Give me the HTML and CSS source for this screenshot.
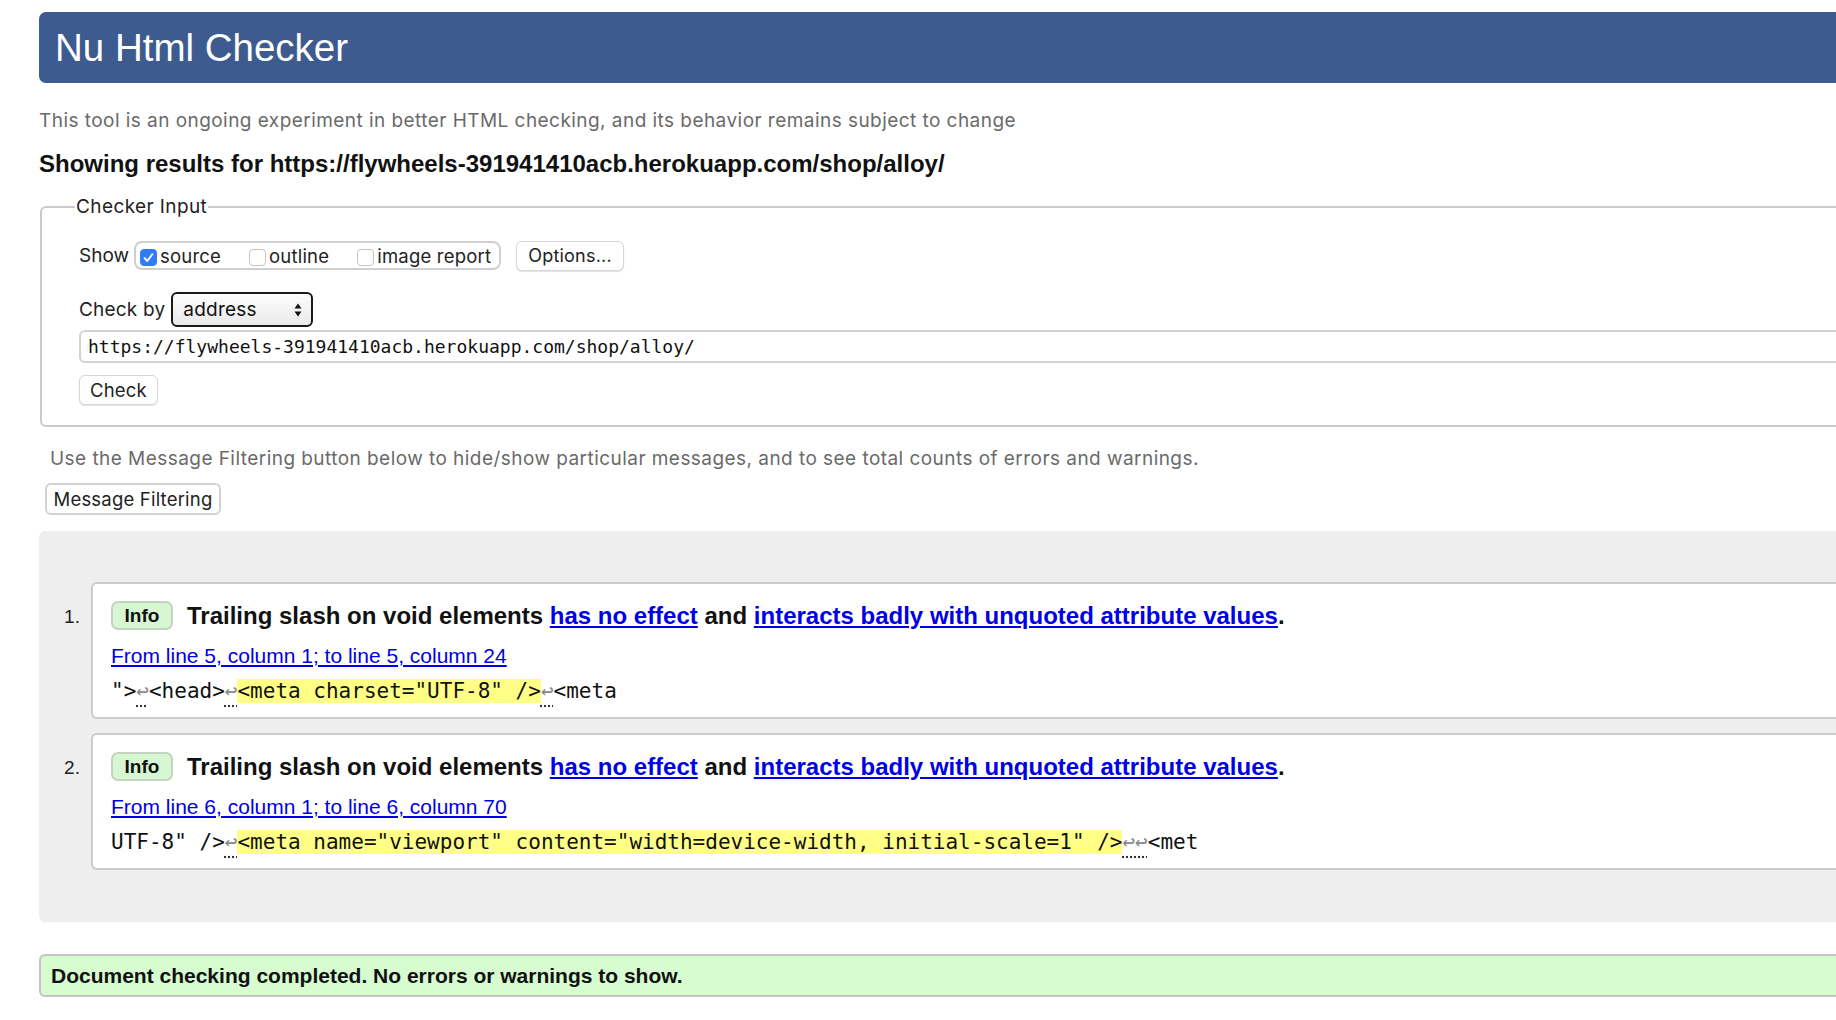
FILE: index.html
```html
<!DOCTYPE html>
<html lang="en">
<head>
<meta charset="utf-8">
<title>Nu Html Checker</title>
<link rel="stylesheet" href="styles.css">
</head>
<body>
<div class="page">
  <header class="banner"><h1>Nu Html Checker</h1></header>
  <p class="intro">This tool is an ongoing experiment in better HTML checking, and its behavior remains subject to change</p>
  <h2 class="showing">Showing results for https://flywheels-391941410acb.herokuapp.com/shop/alloy/</h2>

  <fieldset class="checker">
    <legend>Checker Input</legend>
    <div class="row show-row">
      <span class="lbl show-lbl">Show</span>
      <div class="cbgroup">
        <label class="opt"><span class="cb checked"><svg viewBox="0 0 16 16" width="16" height="16"><path d="M3.8 8.6 L6.7 11.8 L12.2 4.4" fill="none" stroke="#fff" stroke-width="1.9" stroke-linecap="round" stroke-linejoin="round"/></svg></span>source</label>
        <label class="opt"><span class="cb"></span>outline</label>
        <label class="opt"><span class="cb"></span>image report</label>
      </div>
      <button class="btn options">Options...</button>
    </div>
    <div class="row by-row">
      <span class="lbl">Check by</span>
      <div class="select"><span>address</span><svg viewBox="0 0 8 14" width="8" height="14"><path d="M4 0.5 L7.5 5.5 H0.5 Z M4 13.5 L7.5 8.5 H0.5 Z" fill="#111"/></svg></div>
    </div>
    <div class="url">https://flywheels-391941410acb.herokuapp.com/shop/alloy/</div>
    <button class="btn check">Check</button>
  </fieldset>

  <p class="filter-note">Use the Message Filtering button below to hide/show particular messages, and to see total counts of errors and warnings.</p>
  <button class="btn filter">Message Filtering</button>

  <div class="results">
    <ol class="messages">
      <li class="msg">
        <span class="num">1.</span>
        <div class="box">
          <p class="title"><span class="badge">Info</span><span class="text">Trailing slash on void elements <a href="#">has no effect</a> and <a href="#">interacts badly with unquoted attribute values</a>.</span></p>
          <p class="loc"><a href="#">From line 5, column 1; to line 5, column 24</a></p>
          <p class="extract"><code>"&gt;<span class="lf">↩</span>&lt;head&gt;<span class="lf">↩</span><mark>&lt;meta charset="UTF-8" /&gt;</mark><span class="lf">↩</span>&lt;meta</code></p>
        </div>
      </li>
      <li class="msg">
        <span class="num">2.</span>
        <div class="box">
          <p class="title"><span class="badge">Info</span><span class="text">Trailing slash on void elements <a href="#">has no effect</a> and <a href="#">interacts badly with unquoted attribute values</a>.</span></p>
          <p class="loc"><a href="#">From line 6, column 1; to line 6, column 70</a></p>
          <p class="extract"><code>UTF-8" /&gt;<span class="lf">↩</span><mark>&lt;meta name="viewport" content="width=device-width, initial-scale=1" /&gt;</mark><span class="lf">↩↩</span>&lt;met</code></p>
        </div>
      </li>
    </ol>
  </div>

  <p class="success">Document checking completed. No errors or warnings to show.</p>
</div>
</body>
</html>
```
FILE: styles.css
```css
html { overflow: hidden; }
body {
  margin: 0;
  background: #fff;
  color: #111;
  font-family: "Liberation Sans", Arial, sans-serif;
}
.page {
  width: 1900px;
  padding-left: 39px;
  padding-top: 12px;
}
.banner {
  height: 71px;
  background: #3d5b8e;
  border-radius: 7px 0 0 7px;
  display: flex;
  align-items: center;
  padding-left: 16px;
}
.banner h1 {
  margin: 0;
  color: #fff;
  font-weight: normal;
  font-size: 38.5px;
}
.intro {
  margin: 26px 0 0;
  line-height: 24px;
  font-family: Inter, "Liberation Sans", sans-serif;
  font-size: 19px;
  letter-spacing: 0.45px;
  color: #6a6a6a;
}
.showing {
  margin: 17px 0 0;
  line-height: 28px;
  font-size: 24px;
  font-weight: bold;
  color: #111;
}
.checker {
  margin: 18px 0 0 1px;
  padding: 22px 0 20px 33px;
  border: 2px solid #cacaca;
  border-radius: 6px;
  min-width: 0;
}
.checker legend {
  padding: 0 1px;
  font-family: Inter, "Liberation Sans", sans-serif;
  font-size: 19px;
  letter-spacing: 0.4px;
  line-height: 22px;
  color: #222;
}
.row {
  display: flex;
  align-items: center;
  padding-left: 4px;
  font-family: Inter, "Liberation Sans", sans-serif;
  font-size: 19px;
  letter-spacing: 0.2px;
  color: #222;
}
.show-row { height: 31px; }
.lbl { margin-right: 7px; }
.show-lbl { letter-spacing: 0; margin-right: 5px; }
.cbgroup {
  display: flex;
  align-items: center;
  height: 25px;
  width: 359px;
  border: 2px solid #cfcfcf;
  border-radius: 8px;
  padding-left: 4px;
  gap: 28px;
}
.opt {
  display: flex;
  align-items: center;
  font-size: 18.5px;
  letter-spacing: 0.2px;
}
.cb {
  width: 15px;
  height: 15px;
  border: 1px solid #c4c4c4;
  border-radius: 4px;
  background: #fff;
  margin-right: 3px;
  margin-top: 3px;
  display: flex;
  align-items: center;
  justify-content: center;
}
.cb.checked {
  background: #2f7cf6;
  border-color: #2f7cf6;
}
.cb svg { width: 15px; height: 15px; }
.btn {
  font-family: Inter, "Liberation Sans", sans-serif;
  background: #fff;
  border: 1px solid #d6d6d6;
  border-radius: 6px;
  box-shadow: 0 1px 1px rgba(0,0,0,0.12);
  color: #222;
  padding: 0;
  letter-spacing: 0.2px;
}
.options {
  margin-left: 15px;
  width: 108px;
  height: 30px;
  font-size: 18px;
}
.by-row { margin-top: 21px; height: 35px; }
.select {
  border: 2px solid #1a1a1a;
  border-radius: 6px;
  background: linear-gradient(#fdfdfd, #e9e9e9);
  display: flex;
  align-items: center;
  justify-content: space-between;
  padding: 0 9px 0 10px;
  box-sizing: border-box;
  width: 142px;
  height: 35px;
  margin-left: -1px;
  font-size: 19px;
  color: #111;
}
.url {
  margin: 3px 0 0 4px;
  height: 33px;
  box-sizing: border-box;
  border: 2px solid #d2d2d2;
  border-right: none;
  border-radius: 6px 0 0 6px;
  padding-left: 7px;
  display: flex;
  align-items: center;
  font-family: "DejaVu Sans Mono", monospace;
  font-size: 18px;
  color: #111;
}
.check {
  display: block;
  margin: 12px 0 0 4px;
  width: 79px;
  height: 30px;
  font-size: 18.5px;
}
.filter-note {
  margin: 20px 0 0 11px;
  line-height: 24px;
  font-family: Inter, "Liberation Sans", sans-serif;
  font-size: 19px;
  letter-spacing: 0.45px;
  color: #6a6a6a;
}
.filter {
  display: block;
  margin: 12px 0 0 6px;
  width: 176px;
  height: 32px;
  font-size: 18.5px;
  border: 2px solid #d2d2d2;
  box-shadow: none;
}
.results {
  margin-top: 16px;
  background: #eeeeee;
  border-radius: 6px 0 0 6px;
  padding: 51px 0 52px;
}
.messages {
  list-style: none;
  margin: 0;
  padding: 0;
  display: flex;
  flex-direction: column;
  gap: 14px;
}
.msg {
  display: flex;
  align-items: flex-start;
}
.num {
  width: 52px;
  box-sizing: border-box;
  padding-left: 14px;
  margin-top: 23px;
  line-height: 24px;
  font-size: 19px;
  text-align: center;
  color: #222;
}
.box {
  flex: 1;
  background: #fff;
  border: 2px solid #cbcbcb;
  border-right: none;
  border-radius: 6px 0 0 6px;
  padding: 17px 0 14px 18px;
  height: 137px;
  box-sizing: border-box;
}
.box p { margin: 0; }
.title {
  display: flex;
  align-items: center;
  height: 29px;
}
.badge {
  width: 62px;
  height: 29px;
  box-sizing: border-box;
  border: 2px solid #c4d4c1;
  border-radius: 7px;
  background: #d7f7d2;
  display: flex;
  align-items: center;
  justify-content: center;
  font-weight: bold;
  font-size: 19px;
  color: #111;
}
.text {
  margin-left: 14px;
  font-weight: bold;
  font-size: 24px;
  color: #111;
}
a { color: #0000e6; }
.loc {
  margin-top: 14px !important;
  line-height: 24px;
  font-size: 21px;
}
.extract {
  margin-top: 11px !important;
  line-height: 24px;
}
.extract code {
  font-family: "DejaVu Sans Mono", monospace;
  font-size: 21px;
  color: #111;
  white-space: pre;
}
mark { background: #ffff88; color: #111; }
.lf {
  color: #888;
  text-decoration: underline dotted #333;
  text-underline-offset: 7px;
}
.success {
  margin: 32px 0 0;
  height: 43px;
  box-sizing: border-box;
  background: #d6fcd0;
  border: 2px solid #c4c4c4;
  border-right: none;
  border-radius: 6px 0 0 6px;
  padding-left: 10px;
  display: flex;
  align-items: center;
  font-weight: bold;
  font-size: 21px;
  color: #111;
}
```
